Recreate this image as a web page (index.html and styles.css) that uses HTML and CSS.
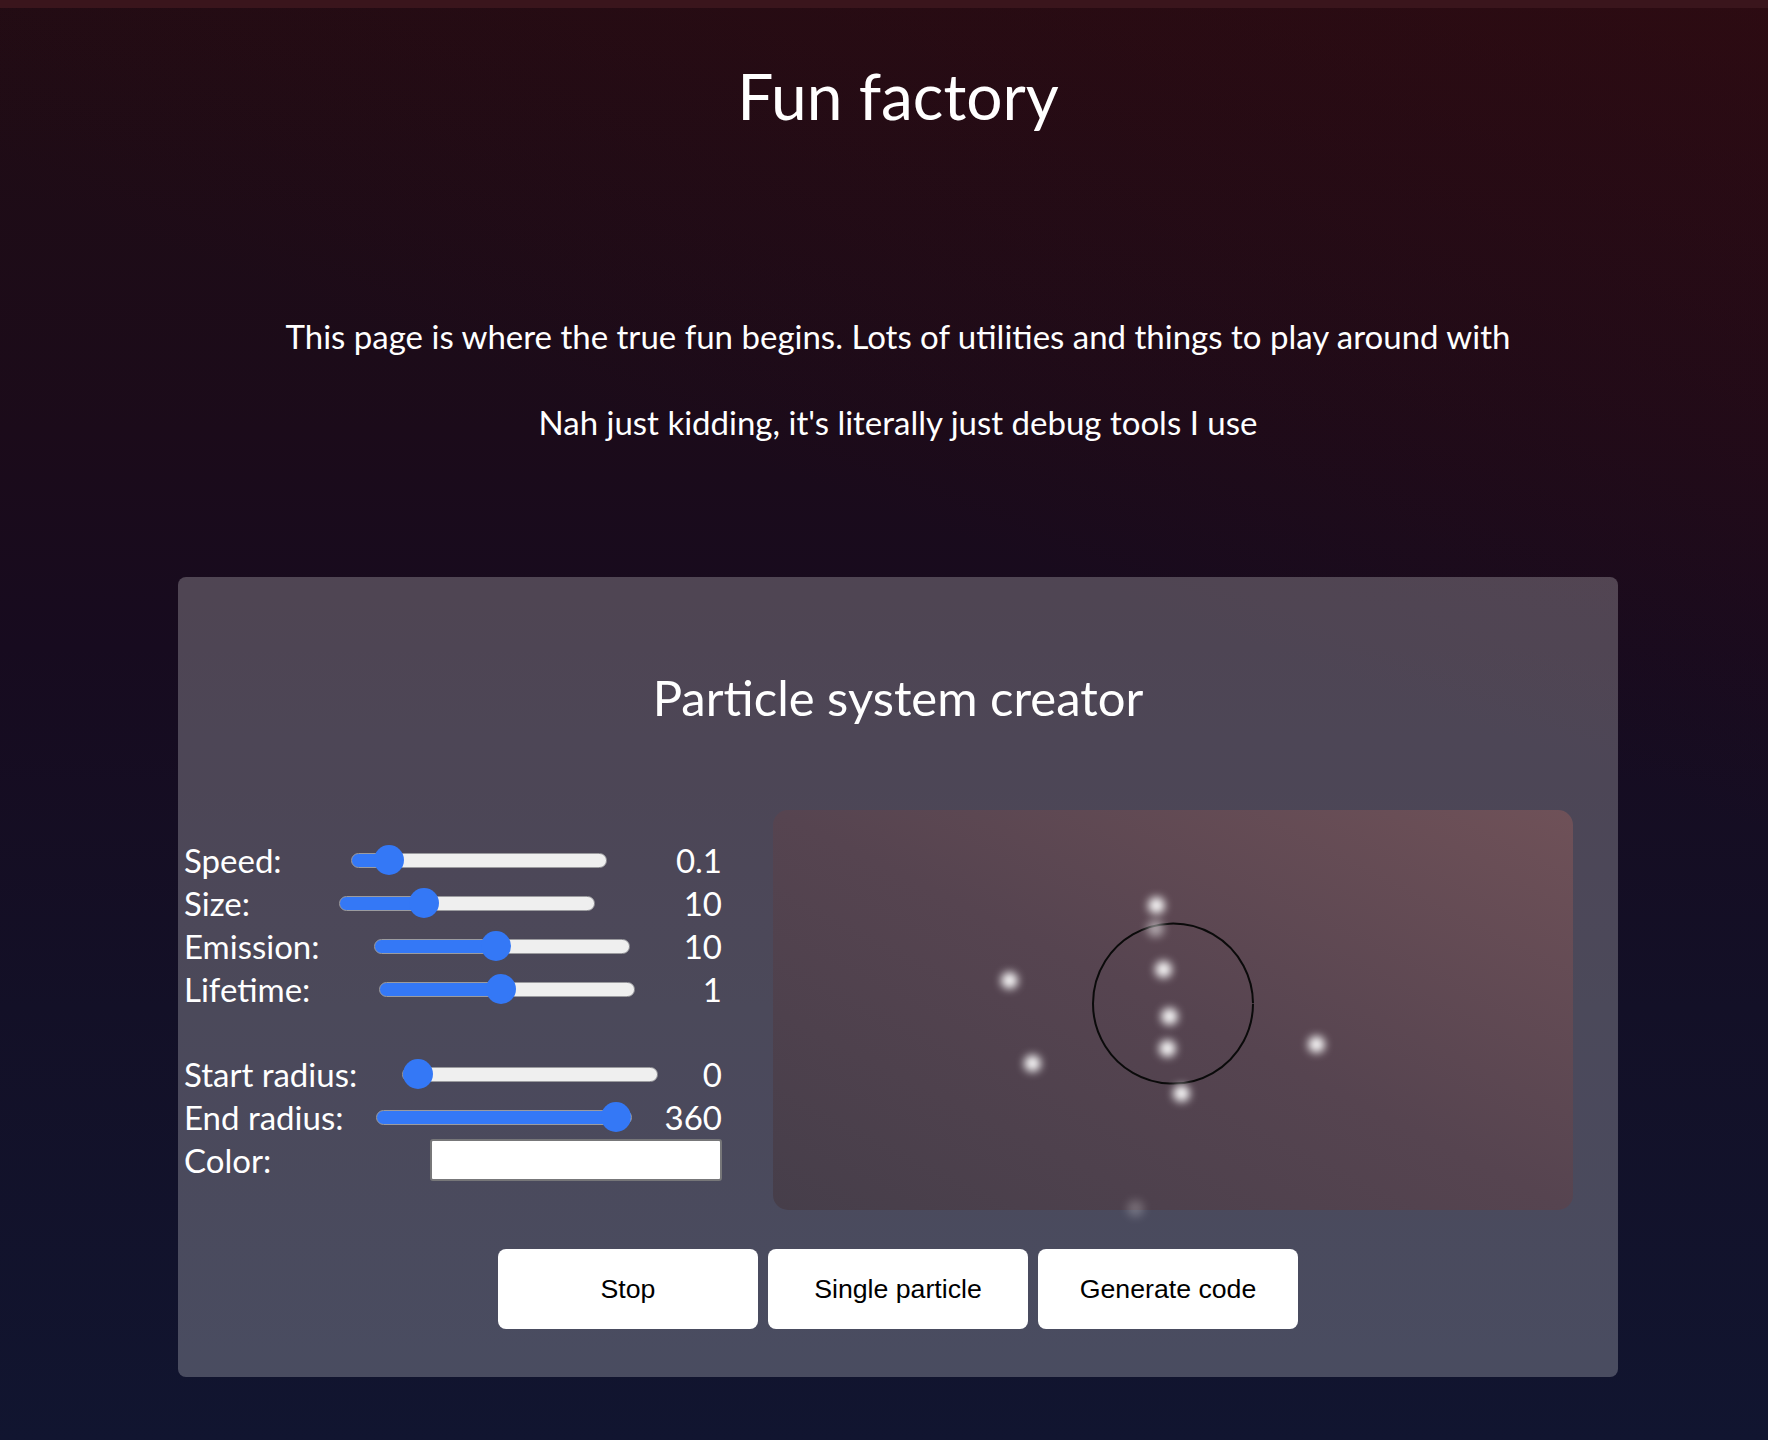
FILE: index.html
```html
<!DOCTYPE html>
<html lang="en">
<head>
<meta charset="utf-8">
<title>Fun factory</title>
<link rel="stylesheet" href="styles.css">
</head>
<body>
<div class="topbar"></div>
<main class="page">
  <h1 class="title">Fun factory</h1>
  <p class="intro intro-first">This page is where the true fun begins. Lots of utilities and things to play around with</p>
  <p class="intro intro-second">Nah just kidding, it's literally just debug tools I use</p>

  <section class="panel">
    <h2 class="panel-title">Particle system creator</h2>
    <div class="creator">
      <div class="controls">
        <div class="row"><span class="label">Speed:</span><input class="slider" type="range" min="0" max="1000" value="100" style="--v:0.1"><span class="value">0.1</span></div>
        <div class="row"><span class="label">Size:</span><input class="slider" type="range" min="0" max="1000" value="310" style="--v:0.31"><span class="value">10</span></div>
        <div class="row"><span class="label">Emission:</span><input class="slider" type="range" min="0" max="1000" value="475" style="--v:0.475"><span class="value">10</span></div>
        <div class="row"><span class="label">Lifetime:</span><input class="slider" type="range" min="0" max="1000" value="475" style="--v:0.475"><span class="value">1</span></div>
        <div class="row spacer"></div>
        <div class="row"><span class="label">Start radius:</span><input class="slider" type="range" min="0" max="1000" value="0" style="--v:0"><span class="value">0</span></div>
        <div class="row"><span class="label">End radius:</span><input class="slider" type="range" min="0" max="1000" value="1000" style="--v:1"><span class="value">360</span></div>
        <div class="row"><span class="label">Color:</span><span class="color-box"></span></div>
      </div>
      <div class="canvas">
        <svg class="ring" width="800" height="400" viewBox="0 0 800 400">
          <path d="M480 194 A80 80 0 1 1 480 193.2" fill="none" stroke="#0a0a0a" stroke-width="2"/>
        </svg>
        <span class="dot" style="left:383px;top:95px"></span>
        <span class="dot dim" style="left:382px;top:118px"></span>
        <span class="dot" style="left:390px;top:159px"></span>
        <span class="dot" style="left:236px;top:170px"></span>
        <span class="dot" style="left:396px;top:206px"></span>
        <span class="dot" style="left:394px;top:238px"></span>
        <span class="dot" style="left:259px;top:253px"></span>
        <span class="dot" style="left:543px;top:234px"></span>
        <span class="dot" style="left:408px;top:283px"></span>
        <span class="dot faint" style="left:362px;top:398px"></span>
      </div>
    </div>
    <div class="buttons">
      <button class="btn">Stop</button>
      <button class="btn">Single particle</button>
      <button class="btn">Generate code</button>
    </div>
  </section>
</main>
</body>
</html>
```
FILE: styles.css
```css
html, body {
  margin: 0;
  padding: 0;
}
body {
  min-height: 1440px;
  font-family: Lato, "Noto Sans", sans-serif;
  color: #ffffff;
  background:
    linear-gradient(200deg, rgba(60, 10, 16, 0.45) 0%, rgba(60, 10, 16, 0) 40%),
    linear-gradient(to bottom, #200c14 0%, #1b0b1a 30%, #170b1f 45%, #131027 70%, #111530 100%);
}
.topbar {
  height: 8px;
  background: #3a151c;
}
.page {
  padding-left: 28px;
  text-align: center;
}
.title {
  margin: 49px 0 0;
  font-size: 64px;
  line-height: 77px;
  font-weight: 400;
}
.intro {
  margin: 0;
  font-size: 33px;
  line-height: 40px;
}
.intro-first { margin-top: 182px; }
.intro-second { margin-top: 46px; }

.panel {
  width: 1440px;
  margin: 135px auto 0;
  box-sizing: border-box;
  padding: 91px 45px 48px 6px;
  background: rgba(255, 255, 255, 0.24);
  border-radius: 8px;
}
.panel-title {
  margin: 0;
  padding-left: 39px;
  font-size: 49px;
  line-height: 58px;
  font-weight: 400;
}
.creator {
  display: flex;
  align-items: center;
  gap: 51px;
  margin-top: 84px;
}
.controls {
  width: 538px;
  display: flex;
  flex-direction: column;
  text-align: left;
}
.row {
  height: 43px;
  display: flex;
  align-items: center;
  justify-content: space-between;
  font-size: 33px;
}
.row.spacer { height: 42px; }
.value { text-align: right; }

.slider {
  -webkit-appearance: none;
  appearance: none;
  width: 256px;
  height: 30px;
  margin: 0;
  background: transparent;
  --fill: calc(15px + var(--v) * 226px);
}
.slider::-webkit-slider-runnable-track {
  height: 15px;
  box-sizing: border-box;
  border-radius: 8px;
  border: 1.5px solid #9b9b9f;
  background: linear-gradient(to right, #3478f6 0, #3478f6 var(--fill), #efefef var(--fill), #efefef 100%);
}
.slider::-webkit-slider-thumb {
  -webkit-appearance: none;
  appearance: none;
  width: 30px;
  height: 30px;
  margin-top: -9px;
  border-radius: 50%;
  background: #3478f6;
  border: none;
}
.color-box {
  width: 292px;
  height: 42px;
  box-sizing: border-box;
  background: #ffffff;
  border: 2px solid #777779;
  border-radius: 3px;
}

.canvas {
  position: relative;
  width: 800px;
  height: 400px;
  flex: none;
  border-radius: 15px;
  background: linear-gradient(to top right, #463e4a 0%, #564450 50%, #6f5158 100%);
}
.ring {
  position: absolute;
  left: 0;
  top: 0;
}
.dot {
  position: absolute;
  width: 17px;
  height: 17px;
  margin: -8.5px 0 0 -8.5px;
  border-radius: 50%;
  background: #ffffff;
  filter: blur(4px);
  opacity: 0.95;
}
.dot.dim { opacity: 0.5; }
.dot.faint { opacity: 0.22; }

.buttons {
  display: flex;
  justify-content: center;
  gap: 10px;
  margin-top: 39px;
  padding-left: 39px;
}
.btn {
  width: 260px;
  height: 80px;
  border: none;
  border-radius: 8px;
  background: #ffffff;
  color: #000000;
  font-family: "Liberation Sans", Arial, sans-serif;
  font-size: 26.7px;
}
```
